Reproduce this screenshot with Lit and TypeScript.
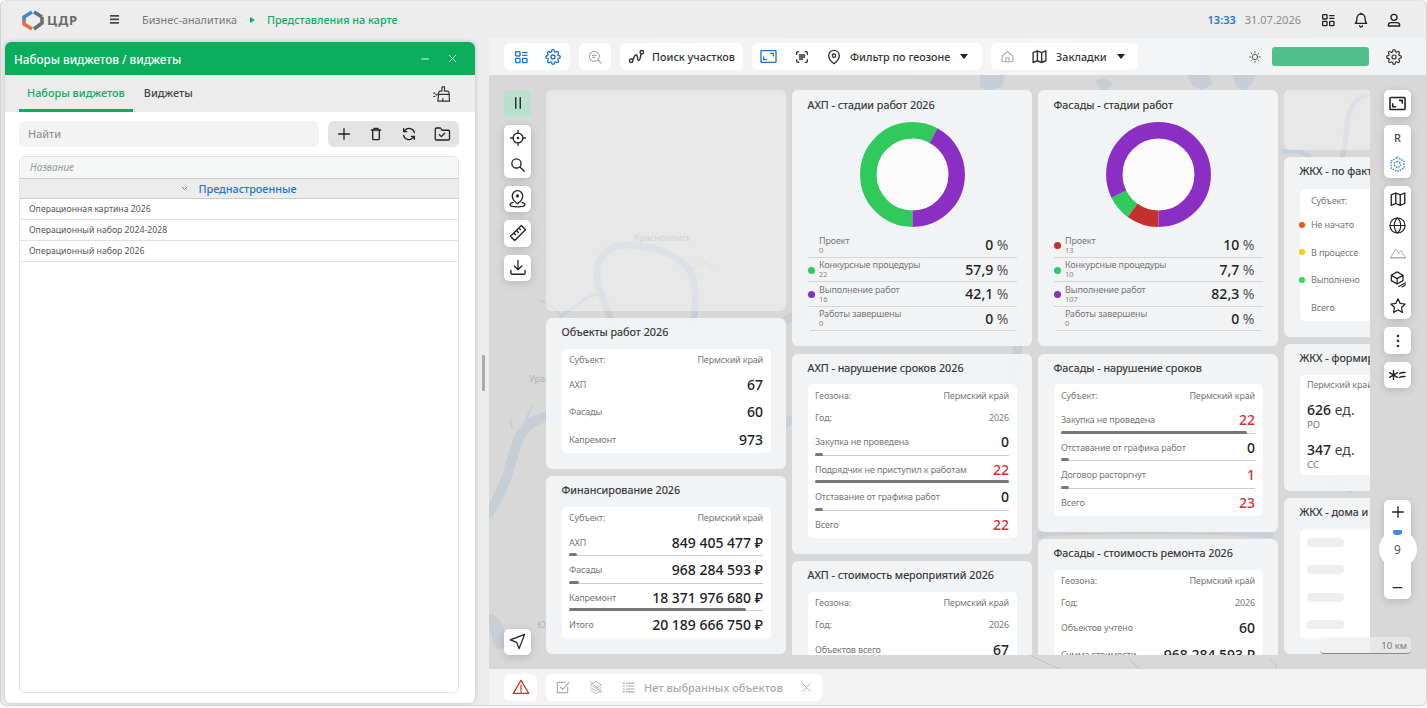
import { LitElement, html, css, svg } from "lit";
import { customElement } from "lit/decorators.js";

const ICONS: Record<string, any> = {
  dash: svg`<rect x="4" y="4" width="6.5" height="6.5" rx="1"/><path d="M14.5 5.5H21M14.5 9.5H21"/><rect x="4" y="14" width="6.5" height="6.5" rx="1"/><rect x="14.5" y="14" width="6.5" height="6.5" rx="1"/>`,
  gear: svg`<path d="M12 15a3 3 0 1 0 0-6 3 3 0 0 0 0 6z"/><path d="M19.4 15a1.65 1.65 0 0 0 .33 1.82l.06.06a2 2 0 1 1-2.83 2.83l-.06-.06a1.65 1.65 0 0 0-1.82-.33 1.65 1.65 0 0 0-1 1.51V21a2 2 0 1 1-4 0v-.09a1.65 1.65 0 0 0-1-1.51 1.65 1.65 0 0 0-1.82.33l-.06.06a2 2 0 1 1-2.83-2.83l.06-.06a1.65 1.65 0 0 0 .33-1.82 1.65 1.65 0 0 0-1.51-1H3a2 2 0 1 1 0-4h.09a1.65 1.65 0 0 0 1.51-1 1.65 1.65 0 0 0-.33-1.82l-.06-.06a2 2 0 1 1 2.83-2.83l.06.06a1.65 1.65 0 0 0 1.82.33h.01a1.65 1.65 0 0 0 1-1.51V3a2 2 0 1 1 4 0v.09a1.65 1.65 0 0 0 1 1.51 1.65 1.65 0 0 0 1.82-.33l.06-.06a2 2 0 1 1 2.83 2.83l-.06.06a1.65 1.65 0 0 0-.33 1.82v.01a1.65 1.65 0 0 0 1.51 1H21a2 2 0 1 1 0 4h-.09a1.65 1.65 0 0 0-1.51 1z"/>`,
  zoomList: svg`<circle cx="11" cy="11" r="7.5"/><path d="M16.5 16.5 21 21M8 9.5h6M8 12.5h4"/>`,
  route: svg`<circle cx="4.5" cy="18" r="2.5"/><circle cx="19.5" cy="6" r="2.5"/><path d="M6.5 16.5c2-1 2-7 5-7s1 8 3.5 8 3-7 3.5-9.5"/>`,
  expand: svg`<rect x="2.5" y="4.5" width="19" height="15" rx="1"/><path d="M14.5 8h3.5v3.5M6 12.5V16h3.5"/>`,
  scan: svg`<path d="M4 8V5.5A1.5 1.5 0 0 1 5.5 4H7M17 4h1.5A1.5 1.5 0 0 1 20 5.5V8M20 16v2.5a1.5 1.5 0 0 1-1.5 1.5H17M7 20H5.5A1.5 1.5 0 0 1 4 18.5V16M8 9h8M8 12h8M8 15h5"/>`,
  pin: svg`<path d="M20 10c0 6-8 12-8 12s-8-6-8-12a8 8 0 0 1 16 0z"/><circle cx="12" cy="10" r="2.5"/>`,
  home: svg`<path d="M3.5 11 12 4l8.5 7v8.5a1 1 0 0 1-1 1h-15a1 1 0 0 1-1-1z"/><path d="M9.5 20.5V14h5v6.5"/>`,
  map: svg`<path d="M3 6.5 9 4l6 2.5L21 4v14l-6 2.5L9 18l-6 2.5zM9 4v14M15 6.5v14"/>`,
  sun: svg`<circle cx="12" cy="12" r="4.5"/><path d="M12 2.5V5M12 19v2.5M2.5 12H5M19 12h2.5M5.3 5.3 7 7M17 17l1.7 1.7M5.3 18.7 7 17M17 7l1.7-1.7"/>`,
  bell: svg`<path d="M18 9a6 6 0 0 0-12 0c0 6-2.5 8-2.5 8h17S18 15 18 9z"/><path d="M12 3V1.8M10 20.5a2 2 0 0 0 4 0"/>`,
  user: svg`<circle cx="12" cy="8" r="4.5"/><path d="M3.5 21v-1.5c0-2 2-3.5 4.5-3.5h8c2.5 0 4.5 1.5 4.5 3.5V21z"/>`,
  crosshair: svg`<circle cx="12" cy="12" r="6.5"/><circle cx="12" cy="12" r=".8"/><path d="M12 2v3.5M12 18.5V22M2 12h3.5M18.5 12H22"/>`,
  search: svg`<circle cx="10.5" cy="10.5" r="6.5"/><path d="m15.5 15.5 6 6"/>`,
  geo: svg`<path d="M18 9c0 4.5-6 9-6 9s-6-4.5-6-9a6 6 0 0 1 12 0z"/><circle cx="12" cy="9" r="1"/><path d="M7 16.5c-2 .6-3.5 1.5-3.5 2.7 0 1.5 3.5 2.3 8.5 2.3s8.5-.8 8.5-2.3c0-1.2-1.5-2.1-3.5-2.7"/>`,
  ruler: svg`<path d="m3 16 13-13 5 5L8 21zM7 12l2 2M10 9l2.5 2.5M13 6l2 2"/>`,
  download: svg`<path d="M12 3v11M7.5 9.5 12 14l4.5-4.5M3.5 15v3A1.5 1.5 0 0 0 5 19.5h14a1.5 1.5 0 0 0 1.5-1.5v-3"/>`,
  send: svg`<path d="M21 3 3 10l8 3 3 8z"/>`,
  plus: svg`<path d="M12 4v16M4 12h16"/>`,
  minus: svg`<path d="M5 12h14"/>`,
  trash: svg`<path d="M5 6h14M9 6V3.5h6V6M7 6v13a1.5 1.5 0 0 0 1.5 1.5h7A1.5 1.5 0 0 0 17 19V6"/>`,
  refresh: svg`<path d="M20 10a8 8 0 0 0-14-3.5L4 8.5M4 4v4.5h4.5M4 14a8 8 0 0 0 14 3.5l2-2M20 20v-4.5h-4.5"/>`,
  folder: svg`<path d="M3 5.5A1.5 1.5 0 0 1 4.5 4H10l2 3h8.5A1.5 1.5 0 0 1 22 8.5v10a1.5 1.5 0 0 1-1.5 1.5h-16A1.5 1.5 0 0 1 3 18.5z"/><path d="m8.5 13 2.5 2.5 4.5-4.5"/>`,
  brush: svg`<path d="M12 3.5h3v5h4.5l1.5 4H7l2-4h3zM8 12.5l-1 8h14l-.5-8M13 20.5v-3M2 11h1.5M2 15h1.5M4.5 13H6"/>`,
  close: svg`<path d="m5 5 14 14M19 5 5 19"/>`,
  globe: svg`<circle cx="12" cy="12" r="9.5"/><path d="M2.5 12h19M12 2.5c3 2.5 4 6 4 9.5s-1 7-4 9.5c-3-2.5-4-6-4-9.5s1-7 4-9.5z"/>`,
  mountain: svg`<path d="M2 19.5 9 8l4 5.5 3-3.500 6 9.5zM2 19.5h20"/>`,
  cube: svg`<path d="M4 7.5 11 3.5l7 4V14l-7 4-7-4zM4 7.5l7 4 7-4M11 11.5V18M13 21l8-4.500M17 21.5l4-2.500"/>`,
  star: svg`<path d="m12 2.5 2.900 6 6.600.9-4.800 4.600 1.200 6.500-5.900-3.200-5.900 3.200L7.300 14 2.500 9.400l6.600-.9z"/>`,
  alert: svg`<path d="M12 3 1.800 20.5h20.400zM12 9.5v6M12 17.5v1"/>`,
  check: svg`<path d="M19 12v7.5a1 1 0 0 1-1 1H4.5a1 1 0 0 1-1-1V6a1 1 0 0 1 1-1H15M8 12l3.5 3.5L21 5"/>`,
  layersOff: svg`<path d="m4 9 8 5 8-5-8-5zM4 13l8 5 8-5M4 17l8 5 8-5M3 3l18 18"/>`,
  list: svg`<path d="M9 5h12M9 9.700h12M9 14.300h12M9 19h12M3 5h2.500M3 9.700h2.500M3 14.300h2.500M3 19h2.500"/>`,
  pause: svg`<path d="M9 5v14M15 5v14"/>`,
};

function icon(name: string, size = 16, sw = 1.7) {
  return html`<svg class="ic" width=${size} height=${size} viewBox="0 0 24 24" fill="none" stroke="currentColor"
    stroke-width=${sw} stroke-linecap="round" stroke-linejoin="round">${ICONS[name]}</svg>`;
}

type Row = { label: string; value: string; stat?: boolean; bar?: number; red?: boolean; dot?: string };

const GEO = { label: "Геозона:", value: "Пермский край" };
const SUBJ = { label: "Субъект:", value: "Пермский край" };
const YEAR = { label: "Год:", value: "2026" };

const s = (label: string, value: string, bar?: number, red = false): Row => ({ label, value, stat: true, bar, red });

const RED = "#c62f2f";
const GREEN = "#2fc95c";
const PURPLE = "#8a2ec4";

const DONUT_AHP = {
  title: "АХП - стадии работ 2026",
  parts: [[57.9, GREEN], [42.1, PURPLE]] as [number, string][],
  legend: [
    ["", "Проект", "0", "0"],
    [GREEN, "Конкурсные процедуры", "22", "57,9"],
    [PURPLE, "Выполнение работ", "16", "42,1"],
    ["", "Работы завершены", "0", "0"],
  ],
};
const DONUT_FAC = {
  title: "Фасады - стадии работ",
  parts: [[10, RED], [7.7, GREEN], [82.3, PURPLE]] as [number, string][],
  legend: [
    [RED, "Проект", "13", "10"],
    [GREEN, "Конкурсные процедуры", "10", "7,7"],
    [PURPLE, "Выполнение работ", "107", "82,3"],
    ["", "Работы завершены", "0", "0"],
  ],
};

@customElement("app-root")
export class AppRoot extends LitElement {
  static override styles = css`
    :host {
      display: block;
      width: 1427px;
      height: 708px;
      overflow: hidden;
      font-family: "Noto Sans", "Open Sans", sans-serif;
      color: #333;
      background: #fff;
    }
    .ic { display: block; flex: none; }
    .frame {
      height: 706px;
      display: flex;
      flex-direction: column;
      background: #ededed;
      border: 1px solid #d2d2d2;
      border-top-color: #e2e2e2;
      border-radius: 6px;
      overflow: hidden;
      box-sizing: border-box;
    }
    .top {
      height: 37px;
      flex: none;
      display: flex;
      align-items: center;
      padding-left: 21px;
      font-size: 10.8px;
    }
    .logo { display: flex; align-items: center; gap: 3px; width: 88px; font-size: 13px; font-weight: 700; color: #6a6a6a; letter-spacing: .6px; }
    .crumb { color: #777; margin-left: 23px; }
    .tri { width: 0; height: 0; border-left: 5px solid #0aad5c; border-top: 3.5px solid transparent; border-bottom: 3.5px solid transparent; margin: 0 12px 0 13px; }
    .crumb-on { color: #0aad5c; font-weight: 500; }
    .clock { margin-left: auto; color: #1976d2; font-weight: 600; font-size: 11px; }
    .date { color: #8b8b8b; font-size: 11px; margin: 0 19px 0 9px; }
    .top-ic { display: flex; gap: 17px; margin-right: 24px; color: #222; }

    .body { flex: 1; display: flex; min-height: 0; }
    .side { width: 488px; flex: none; display: flex; align-items: center; padding: 4px 0 2px 4px; box-sizing: border-box; }
    .panel {
      width: 470px;
      height: 100%;
      display: flex;
      flex-direction: column;
      background: #fff;
      border-radius: 6px;
      box-shadow: 0 0 5px rgba(0, 0, 0, .2);
      overflow: hidden;
    }
    .p-head {
      height: 33px;
      flex: none;
      display: flex;
      align-items: center;
      padding: 0 17px 0 9px;
      gap: 16px;
      background: #0aad5c;
      color: #fff;
      font-size: 11.7px;
      font-weight: 500;
    }
    .p-head span { flex: 1; }
    .tabs { height: 37px; flex: none; display: flex; align-items: stretch; padding: 0 23px 0 14px; background: #ececec; font-size: 10.9px; font-weight: 500; }
    .tab { padding: 0 8px; line-height: 36px; color: #444; margin-right: 3px; }
    .tab.on { color: #0aad5c; border-bottom: 3px solid #0aad5c; box-sizing: border-box; height: 37px; }
    .tab-tool { margin-left: auto; align-self: center; color: #333; }
    .p-tools { display: flex; gap: 9px; padding: 9px 16px 9px 14px; }
    .find { flex: 1; height: 26px; line-height: 26px; background: #f3f3f3; border-radius: 6px; padding-left: 9px; font-size: 11px; color: #888; }
    .acts { width: 131px; height: 26px; display: flex; align-items: center; justify-content: space-around; background: #e3e3e3; border-radius: 6px; color: #222; }
    .table { flex: 1; margin: 0 16px 10px 14px; border: 1px solid #e2e2e2; border-radius: 6px; overflow: hidden; }
    .th { height: 21px; line-height: 21px; background: #f5f6f6; padding-left: 10px; font-size: 10px; font-style: italic; color: #999; }
    .grp {
      height: 19px;
      display: flex;
      align-items: center;
      justify-content: center;
      gap: 10px;
      background: #ececec;
      border-top: 1px solid #ccc;
      border-bottom: 1px solid #ccc;
      font-size: 10.8px;
      font-weight: 500;
      color: #1976d2;
    }
    .tr { height: 20px; line-height: 20px; border-bottom: 1px solid #e2e2e2; padding-left: 9px; font-size: 8.7px; color: #555; }
    .handle { width: 2.5px; height: 36px; background: #aaa; margin-left: 7px; flex: none; border-radius: 1px; }

    .main { flex: 1; display: flex; flex-direction: column; min-width: 0; }
    .bar {
      height: 37px;
      flex: none;
      display: flex;
      align-items: center;
      gap: 9px;
      padding: 0 24px 0 15px;
      background: linear-gradient(90deg, #f1f2f3, #f4f5f7 60%, #f2f3f4);
      font-size: 10.8px;
      font-weight: 500;
    }
    .grp-w { height: 27px; display: flex; align-items: center; gap: 16px; background: #fff; border-radius: 6px; padding: 0 9px; box-sizing: border-box; white-space: nowrap; }
    .grp-w.one { width: 32px; padding: 0; justify-content: center; }
    .grp-w.route { width: 123px; gap: 7px; padding-left: 8px; }
    .grp-w.filter { width: 230px; padding-left: 7px; }
    .grp-w.marks { width: 147px; }
    .lbl { display: flex; gap: 8px; align-items: center; }
    .blue { color: #1976d2; }
    .mute { color: #aaa; }
    .caret { width: 0; height: 0; border-top: 5px solid #222; border-left: 4.5px solid transparent; border-right: 4.5px solid transparent; margin-left: -6px; }
    .sun { margin-left: auto; color: #333; }
    .status { width: 97px; height: 19px; background: #52c08a; border-radius: 3px; margin: 0 8px 0 1px; }

    .map { flex: 1; position: relative; background: #d8d8d8; overflow: hidden; min-height: 0; }
    .rivers { position: absolute; inset: 0; }
    .place { position: absolute; font-size: 9px; color: #b4b4b4; }
    .widgets {
      position: absolute;
      left: 57px;
      top: 15px;
      width: 824px;
      height: 565px;
      display: flex;
      gap: 6px;
      overflow: hidden;
    }
    .col { width: 240px; flex: none; display: flex; flex-direction: column; gap: 7.5px; }
    .card { flex: none; background: rgba(243, 244, 245, .93); border-radius: 6px; padding: 0 15.5px 15.5px; box-sizing: border-box; }
    .blank { background: rgba(255, 255, 255, .42); flex: none; border-radius: 6px; }
    .title { height: 30.5px; line-height: 27px; font-size: 10.8px; color: #333; white-space: nowrap; -webkit-text-stroke: .15px #333; }
    .pie .title { line-height: 29px; }
    .inner { background: #fff; border-radius: 5px; padding: 0 7.5px; }
    .inner.wide { padding-left: 11.5px; margin-top: 1.5px; }
    .row { display: flex; align-items: center; justify-content: space-between; height: 22px; font-size: 9px; letter-spacing: -.15px; color: #777; white-space: nowrap; }
    .row.short { height: 20.5px; }
    .stat { position: relative; height: 27.5px; padding-bottom: .5px; box-sizing: border-box; }
    .num { font-size: 14px; letter-spacing: 0; font-weight: 500; color: #222; }
    .num.red { color: #d63232; }
    .track { position: absolute; left: 0; right: 0; bottom: 0; height: 1px; background: #ccc; }
    .fill { position: absolute; left: 0; top: -2px; height: 3px; background: #777; border-radius: 1.5px; }
    .dot { position: absolute; left: -12px; width: 6px; height: 6px; border-radius: 50%; }
    .donut { display: flex; justify-content: center; height: 112.5px; padding-top: 1.5px; box-sizing: border-box; }
    .leg { display: flex; align-items: center; height: 24.5px; border-bottom: 1px solid #d5d5d5; box-sizing: border-box; padding: 0 8px 0 11.5px; position: relative; }
    .leg:last-child { margin: 0 2px; padding: 0 6px 0 9.5px; }
    .leg-dot { position: absolute; left: 0; width: 7px; height: 7px; border-radius: 50%; top: 9px; }
    .leg-t { flex: 1; font-size: 9px; letter-spacing: -.15px; line-height: 11px; color: #777; white-space: nowrap; }
    .leg-t small { display: block; font-size: 7.5px; line-height: 9px; letter-spacing: 0; color: #888; }
    .leg-v { font-size: 14px; font-weight: 500; color: #222; }
    .leg-v i { font-style: normal; font-weight: 400; color: #555; }
    .big { padding-top: 5px; height: 40px; box-sizing: border-box; font-size: 9.5px; color: #777; line-height: 12px; }
    .big b { display: block; font-size: 14px; line-height: 19px; font-weight: 500; color: #222; }
    .big b i { font-style: normal; font-weight: 400; color: #444; }
    .skel { display: block; width: 37px; height: 9px; border-radius: 4px; background: #eee; }
    .skel-row { height: 27.5px; display: flex; align-items: center; }

    .strip { position: absolute; left: 881px; top: 0; bottom: 0; right: 0; background: #d8d8d8; }
    .tools { position: absolute; top: 15px; bottom: 14px; display: flex; flex-direction: column; gap: 8px; }
    .tools.l { left: 15px; }
    .tools.r { left: 895px; }
    .tbox { width: 27px; display: flex; flex-direction: column; align-items: center; background: #fff; border-radius: 5px; box-shadow: 0 2px 8px rgba(0, 0, 0, .16); color: #222; }
    .tbox > * { height: 26.5px; display: flex; align-items: center; justify-content: center; }
    .tbox.tall > * { height: 26.8px; }
    .tbox.act { background: #b9e1cd; box-shadow: none; }
    .r-letter { font-size: 11px; font-weight: 500; color: #444; }
    .push { margin-top: auto; }
    .zoom { position: absolute; left: 895px; top: 425px; width: 27px; height: 99px; background: #fff; border-radius: 5px; box-shadow: 0 2px 8px rgba(0, 0, 0, .16); display: flex; flex-direction: column; align-items: center; justify-content: space-between; padding: 4px 0; box-sizing: border-box; color: #222; }
    .knob { position: absolute; left: -5.5px; top: 30px; width: 38px; height: 38px; border-radius: 50%; background: #fff; display: flex; align-items: center; justify-content: center; font-size: 12px; color: #555; }
    .knob::before { content: ""; position: absolute; left: 14.5px; top: 0; width: 9px; height: 5px; background: #3a8fe0; border-radius: 1px 1px 3px 3px; }
    .scale { position: absolute; left: 831px; top: 562px; width: 91px; height: 17px; background: rgba(240, 240, 240, .6); border-radius: 4px; border-bottom: 1px solid #888; box-sizing: border-box; text-align: right; padding-right: 4px; font-size: 9.5px; line-height: 17px; color: #777; }

    .bottom { height: 36px; flex: none; display: flex; align-items: center; gap: 9px; padding: 0 0 0 15px; background: #f3f3f3; }
    .alert { width: 33px; height: 27px; display: flex; align-items: center; justify-content: center; background: #fff; border-radius: 6px; color: #d92c2c; }
    .sel { width: 276px; height: 27px; display: flex; align-items: center; gap: 17px; background: #fff; border-radius: 6px; padding: 0 9px; box-sizing: border-box; color: #aaa; font-size: 11px; font-weight: 500; }
    .sel span { flex: 1; margin-left: -9px; white-space: nowrap; }
  `;

  private _icons(names: string[], size = 16, sw = 1.7) {
    return names.map((n) => html`<div>${icon(n, size, sw)}</div>`);
  }

  private _donut(parts: [number, string][]) {
    let done = 0;
    return html`<svg width="105" height="105" viewBox="0 0 105 105">
      <circle cx="52.5" cy="52.5" r="37" fill="#fbfbfb"/>
      <g transform="rotate(90 52.5 52.5)" fill="none" stroke-width="16.5">
        ${parts.map(([v, c]) => {
          const el = svg`<circle cx="52.5" cy="52.5" r="44.2" pathLength="100" stroke=${c}
            stroke-dasharray="${v} ${100 - v}" stroke-dashoffset=${-done}/>`;
          done += v;
          return el;
        })}
      </g>
    </svg>`;
  }

  private _rows(rows: Row[]) {
    return rows.map((r) => r.stat
      ? html`<div class="row stat">
          ${r.dot ? html`<span class="dot" style="background:${r.dot}"></span>` : ""}
          <span>${r.label}</span><span class="num ${r.red ? "red" : ""}">${r.value}</span>
          ${r.bar !== undefined ? html`<div class="track"><div class="fill" style="width:${r.bar}%"></div></div>` : ""}
        </div>`
      : html`<div class="row"><span>${r.label}</span><span>${r.value}</span></div>`);
  }

  private _stat(title: string, rows: Row[], wide = false) {
    return html`<div class="card">
      <div class="title">${title}</div>
      <div class="inner ${wide ? "wide" : ""}">${this._rows(rows)}</div>
    </div>`;
  }

  private _pie(d: typeof DONUT_AHP) {
    return html`<div class="card pie" style="height:256px">
      <div class="title">${d.title}</div>
      <div class="donut">${this._donut(d.parts)}</div>
      ${d.legend.map(([c, name, n, v]) => html`<div class="leg">
        ${c ? html`<span class="leg-dot" style="background:${c}"></span>` : ""}
        <div class="leg-t">${name}<small>${n}</small></div>
        <div class="leg-v">${v} <i>%</i></div>
      </div>`)}
    </div>`;
  }

  private _rivers() {
    return html`<svg class="rivers" width="938" height="594" viewBox="489 75 938 594" fill="none" stroke="#c6ced8" stroke-linecap="round">
      <path stroke-width="7" d="M612 325c-3-18-14-30-15-48-1-18 10-32 30-32 22 0 48 8 60 22 9 12 10 30 6 58"/>
      <path stroke-width="3" d="M603 294c-10 0-16 2-22 8-6 6-14 10-20 14"/>
      <path stroke-width="1.5" d="M540 300c8 4 14 8 20 14M693 268l12-5 8 4"/>
      <path stroke-width="10" d="M550 416c-12 2-24 8-30 20-8 16-10 46-32 78"/>
      <path stroke-width="2" d="M524 425c2-8 6-12 8-20M510 420l2 8"/>
      <path stroke-width="14" d="M486 620c10 2 12 10 14 22"/>
      <path stroke-width="9" d="M786 320l20-10M1020 330l-8 60M790 420l-10 8"/>
      <path stroke-width="5" d="M1366 95c-10 3-16 12-18 24-2 14-2 22-6 40M1284 152c8-2 20-2 28 8"/>
      <path fill="#c6ced8" stroke="none" d="M980 75h25l-3 12-12 3-10-2zM1187 75h22l4 8-10 7-10-4zM1232 75h24l-4 8-6 8-10-4zM1095 80l10-2 8 6-10 8z"/>
      <path stroke-width="6" d="M1040 535c10-4 160-6 230 0M1310 470l40 20"/>
      <path stroke-width="1" stroke="#b9c2cd" d="M1030 655c10 5 20 10 30 14M1130 660l10 9M1270 660c6 3 6 6 6 9"/>
    </svg>
    <span class="place" style="left:145px;top:156px">Краснокамск</span>
    <span class="place" style="left:40px;top:297px">Урал</span>
    <span class="place" style="left:48px;top:543px">Ю</span>`;
  }

  override render() {
    return html`<div class="frame">
      <header class="top">
        <div class="logo">
          <svg width="22" height="22" viewBox="0 0 22 22" fill="none" stroke-width="3.5">
            <path d="M2 13V8l8-5" stroke="#3b8ad0"/>
            <path d="M12 3l8 5" stroke="#5f6f78"/>
            <path d="M2 11v4l8 5" stroke="#e8693f"/>
            <path d="M20 8v6l-8 6" stroke="#6d6d6d"/>
          </svg>
          <span>ЦДР</span>
        </div>
        <svg width="9" height="9" viewBox="0 0 9 9" fill="#444"><rect width="9" height="1.7" y="0"/><rect width="9" height="1.7" y="3.5"/><rect width="9" height="1.7" y="7"/></svg>
        <span class="crumb">Бизнес-аналитика</span>
        <span class="tri"></span>
        <span class="crumb-on">Представления на карте</span>
        <span class="clock">13:33</span>
        <span class="date">31.07.2026</span>
        <div class="top-ic">${icon("dash", 16, 2)}${icon("bell", 16, 2)}${icon("user", 16, 2)}</div>
      </header>
      <div class="body">
        <div class="side">
          <section class="panel">
            <div class="p-head"><span>Наборы виджетов / виджеты</span>${icon("minus", 12)}${icon("close", 11)}</div>
            <div class="tabs">
              <div class="tab on">Наборы виджетов</div>
              <div class="tab">Виджеты</div>
              <div class="tab-tool">${icon("brush", 20, 1.4)}</div>
            </div>
            <div class="p-tools">
              <div class="find">Найти</div>
              <div class="acts">${icon("plus", 16, 2)}${icon("trash", 16, 2)}${icon("refresh", 16, 2)}${icon("folder", 18)}</div>
            </div>
            <div class="table">
              <div class="th">Название</div>
              <div class="grp">
                <svg width="7" height="5" viewBox="0 0 7 5" fill="none" stroke="#777"><path d="m1 1 2.5 2.5L6 1"/></svg>
                Преднастроенные
              </div>
              <div class="tr">Операционная картина 2026</div>
              <div class="tr">Операционный набор 2024-2028</div>
              <div class="tr">Операционный набор 2026</div>
            </div>
          </section>
          <div class="handle"></div>
        </div>
        <main class="main">
          <div class="bar">
            <div class="grp-w blue">${icon("dash", 16, 2)}${icon("gear", 16, 2)}</div>
            <div class="grp-w mute one">${icon("zoomList", 16)}</div>
            <div class="grp-w route">${icon("route", 17, 2)}Поиск участков</div>
            <div class="grp-w filter">
              <span class="blue">${icon("expand", 19)}</span>
              ${icon("scan", 16, 2)}
              <span class="lbl">${icon("pin", 16, 2)}Фильтр по геозоне</span>
              <span class="caret"></span>
            </div>
            <div class="grp-w marks">
              <span class="mute">${icon("home", 15)}</span>
              <span class="lbl">${icon("map", 17, 2)}Закладки</span>
              <span class="caret"></span>
            </div>
            <span class="sun">${icon("sun", 14, 1.3)}</span>
            <span class="status"></span>
            ${icon("gear", 16, 1.8)}
          </div>
          <div class="map">
            ${this._rivers()}
            <div class="widgets">
              <div class="col">
                <div class="blank" style="height:220.5px"></div>
                ${this._stat("Объекты работ 2026", [SUBJ, s("АХП", "67"), s("Фасады", "60"), s("Капремонт", "973")])}
                ${this._stat("Финансирование 2026", [SUBJ, s("АХП", "849 405 477 ₽", 4), s("Фасады", "968 284 593 ₽", 5), s("Капремонт", "18 371 976 680 ₽", 91), s("Итого", "20 189 666 750 ₽")])}
              </div>
              <div class="col">
                ${this._pie(DONUT_AHP)}
                ${this._stat("АХП - нарушение сроков 2026", [GEO, YEAR, s("Закупка не проведена", "0", 4), s("Подрядчик не приступил к работам", "22", 100, true), s("Отставание от графика работ", "0", 4), s("Всего", "22", undefined, true)])}
                ${this._stat("АХП - стоимость мероприятий 2026", [GEO, YEAR, s("Объектов всего", "67")])}
              </div>
              <div class="col">
                ${this._pie(DONUT_FAC)}
                ${this._stat("Фасады - нарушение сроков", [SUBJ, s("Закупка не проведена", "22", 96, true), s("Отставание от графика работ", "0", 4), s("Договор расторгнут", "1", 4, true), s("Всего", "23", undefined, true)])}
                ${this._stat("Фасады - стоимость ремонта 2026", [GEO, YEAR, s("Объектов учтено", "60"), s("Сумма стоимости", "968 284 593 ₽")])}
              </div>
              <div class="col">
                <div class="blank" style="height:59.5px"></div>
                ${this._stat("ЖКХ - по факту работ", [
                  { label: "Субъект:", value: "" },
                  { ...s("Не начато", ""), dot: "#f4511e" },
                  { ...s("В процессе", ""), dot: "#ffcc00" },
                  { ...s("Выполнено", ""), dot: "#22e05c" },
                  s("Всего", ""),
                ], true)}
                <div class="card">
                  <div class="title">ЖКХ - формирование</div>
                  <div class="inner" style="height:100.5px">
                    <div class="row short">Пермский край</div>
                    <div class="big"><b>626 <i>ед.</i></b>РО</div>
                    <div class="big"><b>347 <i>ед.</i></b>СС</div>
                  </div>
                </div>
                <div class="card">
                  <div class="title">ЖКХ - дома и квартиры</div>
                  <div class="inner" style="height:110px">
                    <div class="skel-row"><i class="skel"></i></div>
                    <div class="skel-row"><i class="skel"></i></div>
                    <div class="skel-row"><i class="skel"></i></div>
                    <div class="skel-row"><i class="skel"></i></div>
                  </div>
                </div>
              </div>
            </div>
            <div class="strip"></div>
            <div class="tools l">
              <div class="tbox act">${this._icons(["pause"], 18, 1.8)}</div>
              <div class="tbox">${this._icons(["crosshair"], 18)}${this._icons(["search"], 17, 1.9)}</div>
              <div class="tbox">${this._icons(["geo"], 21, 1.5)}</div>
              <div class="tbox">${this._icons(["ruler"], 20, 1.6)}</div>
              <div class="tbox">${this._icons(["download"], 20, 1.6)}</div>
              <div class="tbox push">${this._icons(["send"], 19, 1.6)}</div>
            </div>
            <div class="tools r">
              <div class="tbox">${this._icons(["expand"], 19, 2)}</div>
              <div class="tbox">
                <div class="r-letter">R</div>
                <div><svg class="ic" width="17" height="17" viewBox="0 0 24 24" fill="none" stroke="#3a8fe0" stroke-width="2.4" stroke-dasharray="0.1 3.6" stroke-linecap="round"><path d="M12 2 21 7v10L12 22 3 17V7z"/><path d="M12 7.5 16 10v4l-4 2.5L8 14v-4z"/></svg></div>
              </div>
              <div class="tbox tall">${this._icons(["map"], 18, 1.8)}<div>${icon("globe", 19, 1.5)}</div><div class="mute">${icon("mountain", 18, 1.3)}</div>${this._icons(["cube"], 20, 1.5)}${this._icons(["star"], 18, 1.6)}</div>
              <div class="tbox">
                <div><svg width="4" height="14" viewBox="0 0 4 14" fill="#333"><circle cx="2" cy="2" r="1.3"/><circle cx="2" cy="7" r="1.3"/><circle cx="2" cy="12" r="1.3"/></svg></div>
              </div>
              <div class="tbox">
                <div><svg width="17" height="10" viewBox="0 0 17 10" fill="none" stroke="#222" stroke-width="1.4" stroke-linecap="round"><path d="M4.5.5v9M.6 2.7l7.8 4.6M8.4 2.7.6 7.3M10.5 3.5c1.5-1.2 3-1.2 5.5-1M10.5 7.5c1.5-1.2 3-1.2 5.5-1"/></svg></div>
              </div>
            </div>
            <div class="zoom">
              ${icon("plus", 16, 2)}
              <div class="knob">9</div>
              ${icon("minus", 15, 2)}
            </div>
            <div class="scale">10 км</div>
          </div>
          <div class="bottom">
            <div class="alert">${icon("alert", 18)}</div>
            <div class="sel">
              ${icon("check", 16)}
              ${icon("layersOff", 16, 1.3)}
              ${icon("list", 15)}
              <span>Нет выбранных объектов</span>
              ${icon("close", 13)}
            </div>
          </div>
        </main>
      </div>
    </div>`;
  }
}
